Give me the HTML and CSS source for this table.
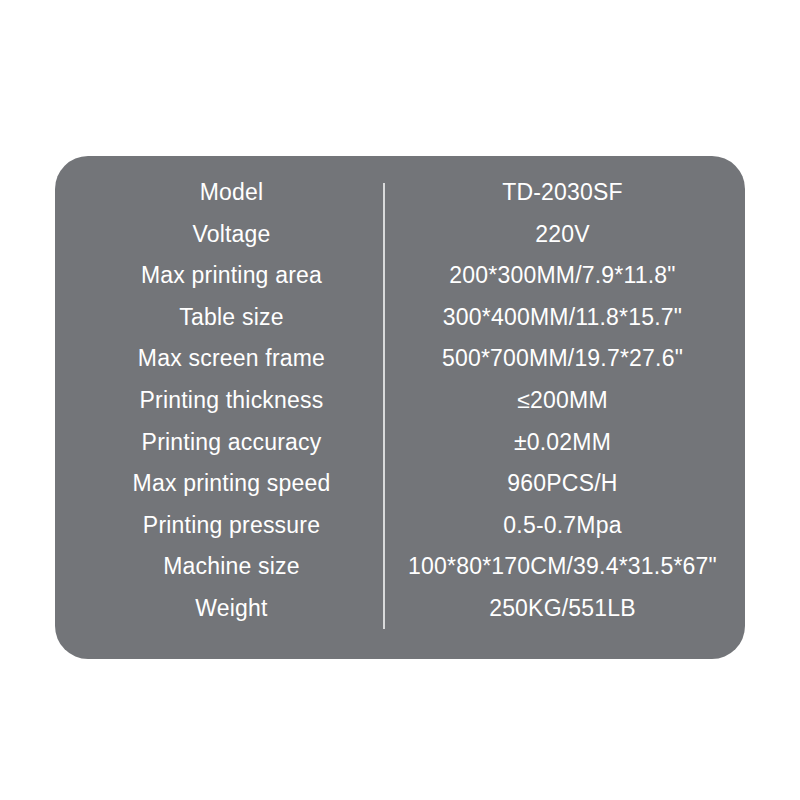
FILE: index.html
```html
<!DOCTYPE html>
<html>
<head>
<meta charset="utf-8">
<link rel="stylesheet" href="styles.css">
</head>
<body>
<div class="card">
  <div class="specs">
    <div class="col labels">
      <div class="cell">Model</div>
      <div class="cell">Voltage</div>
      <div class="cell">Max printing area</div>
      <div class="cell">Table size</div>
      <div class="cell">Max screen frame</div>
      <div class="cell">Printing thickness</div>
      <div class="cell">Printing accuracy</div>
      <div class="cell">Max printing speed</div>
      <div class="cell">Printing pressure</div>
      <div class="cell">Machine size</div>
      <div class="cell">Weight</div>
    </div>
    <div class="divider"></div>
    <div class="col values">
      <div class="cell">TD-2030SF</div>
      <div class="cell">220V</div>
      <div class="cell">200*300MM/7.9*11.8"</div>
      <div class="cell">300*400MM/11.8*15.7"</div>
      <div class="cell">500*700MM/19.7*27.6"</div>
      <div class="cell">≤200MM</div>
      <div class="cell">±0.02MM</div>
      <div class="cell">960PCS/H</div>
      <div class="cell">0.5-0.7Mpa</div>
      <div class="cell">100*80*170CM/39.4*31.5*67"</div>
      <div class="cell">250KG/551LB</div>
    </div>
  </div>
</div>
</body>
</html>
```
FILE: styles.css
```css
html, body {
  margin: 0;
  padding: 0;
  background: #ffffff;
}
body {
  width: 800px;
  height: 800px;
  font-family: "Liberation Sans", Arial, sans-serif;
}
.card {
  box-sizing: border-box;
  width: 690px;
  height: 503px;
  margin: 156px 0 0 55px;
  padding: 16px 5px 0 25px;
  background: #737579;
  border-radius: 33px;
  color: #ffffff;
}
.specs {
  display: grid;
  grid-template-columns: 303px 2px 355px;
}
.col {
  display: flex;
  flex-direction: column;
}
.cell {
  height: 41.6px;
  line-height: 41.6px;
  font-size: 23px;
  letter-spacing: 0.2px;
  text-align: center;
  white-space: nowrap;
}
.divider {
  margin-top: 11px;
  margin-bottom: 1px;
  background: #d9dadb;
}
```
